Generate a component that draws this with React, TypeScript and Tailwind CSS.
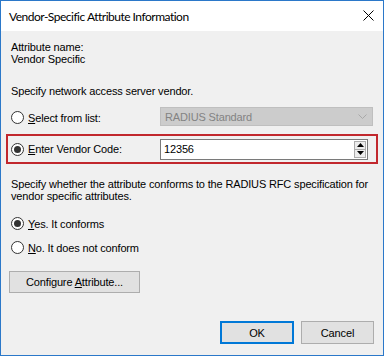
import React from "react";

const body = { fontFamily: '"Liberation Sans", Arial, sans-serif' };
const title = { fontFamily: 'Lato, "Noto Sans", sans-serif' };

function Radio({ checked }: { checked?: boolean }) {
  return (
    <span className="w-[13px] h-[13px] rounded-full border border-[#333333] bg-white flex items-center justify-center shrink-0">
      {checked && <span className="w-[7px] h-[7px] rounded-full bg-[#333333]" />}
    </span>
  );
}

export default function App() {
  return (
    <div className="w-[385px] h-[356px] bg-white">
      <div className="w-[384px] h-[356px] border border-[#2b78c9] bg-[#f0f0f0] flex flex-col text-black" style={body}>
        <div className="h-[30px] bg-white flex items-start justify-between pl-[8px] pr-[9px] shrink-0">
          <span className="text-[12px] leading-[16px] mt-[8px] tracking-[-0.5px] text-black" style={title}>
            Vendor-Specific Attribute Information
          </span>
          <svg width="11" height="11" viewBox="0 0 11 11" className="mt-[9px]">
            <path d="M0.5 0.5 L10.5 10.5 M10.5 0.5 L0.5 10.5" stroke="#000" strokeWidth="1" />
          </svg>
        </div>
        <div className="flex flex-col pl-[10px] pt-[10px] text-[11px] leading-[12px] tracking-[-0.15px]">
          <div>Attribute name:</div>
          <div>Vendor Specific</div>
          <div className="mt-[20px]">Specify network access server vendor.</div>
          <div className="mt-[10px] h-[21px] flex items-center">
            <div className="w-[149px] flex items-center">
              <Radio />
              <span className="ml-[4px]"><span className="underline">S</span>elect from list:</span>
            </div>
            <div className="w-[213px] h-[19px] self-start border border-[#bfbfbf] bg-[#cccccc] flex items-center justify-between pl-[4px] pr-[5px] text-[#838383]">
              <span>RADIUS Standard</span>
              <svg width="9" height="5" viewBox="0 0 9 5">
                <path d="M0.5 0.5 L4.5 4.5 L8.5 0.5" stroke="#a8a8a8" strokeWidth="1" fill="none" />
              </svg>
            </div>
          </div>
          <div className="mt-[6px] ml-[-5px] w-[372px] h-[30px] border-2 border-[#c1272d] flex items-center pl-[3px]">
            <div className="w-[149px] flex items-center">
              <Radio checked />
              <span className="ml-[4px]"><span className="underline">E</span>nter Vendor Code:</span>
            </div>
            <div className="w-[208px] h-[21px] border border-[#7a7a7a] bg-white flex items-center justify-between pl-[3px] pr-[1px]">
              <span>12356</span>
              <div className="flex flex-col w-[12px] h-[17px] border border-[#acacac] bg-[#ececec]">
                <div className="flex-1 border-b border-[#acacac] flex items-center justify-center">
                  <svg width="7" height="4" viewBox="0 0 7 4"><path d="M3.5 0 L7 4 L0 4 Z" fill="#000" /></svg>
                </div>
                <div className="flex-1 flex items-center justify-center">
                  <svg width="7" height="4" viewBox="0 0 7 4"><path d="M0 0 L7 0 L3.5 4 Z" fill="#000" /></svg>
                </div>
              </div>
            </div>
          </div>
          <div className="mt-[14px]">Specify whether the attribute conforms to the RADIUS RFC specification for</div>
          <div>vendor specific attributes.</div>
          <div className="mt-[14px] h-[15px] flex items-center">
            <Radio checked />
            <span className="ml-[4px]"><span className="underline">Y</span>es. It conforms</span>
          </div>
          <div className="mt-[9px] h-[15px] flex items-center">
            <Radio />
            <span className="ml-[4px]"><span className="underline">N</span>o. It does not conform</span>
          </div>
          <div className="mt-[16px] ml-[-2px] w-[131px] h-[22px] border border-[#adadad] bg-[#e1e1e1] flex items-center justify-center">
            <span>Configure <span className="underline">A</span>ttribute...</span>
          </div>
          <div className="mt-[28px] ml-[209px] flex gap-[7px]">
            <div className="w-[74px] h-[23px] border-2 border-[#0078d7] bg-[#e1e1e1] flex items-center justify-center">OK</div>
            <div className="w-[73px] h-[23px] border border-[#adadad] bg-[#e1e1e1] flex items-center justify-center">Cancel</div>
          </div>
        </div>
      </div>
    </div>
  );
}
